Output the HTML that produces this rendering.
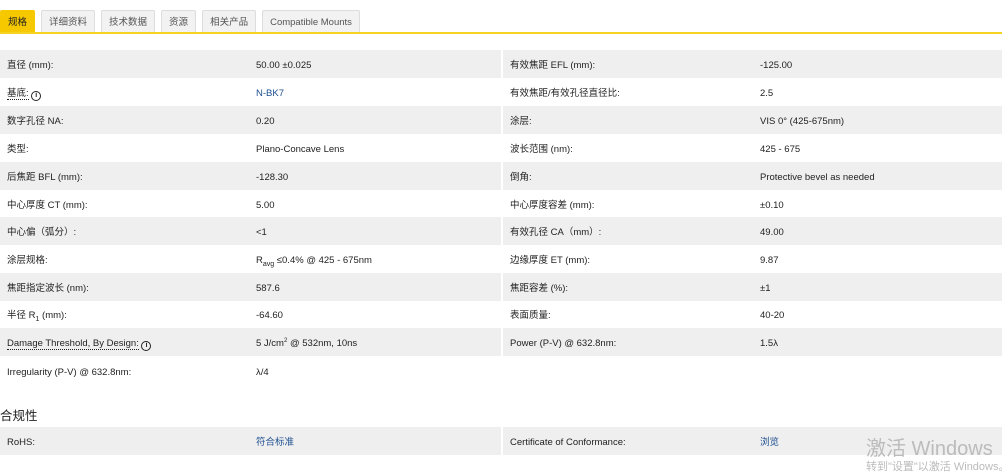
<!DOCTYPE html>
<html><head><meta charset="utf-8"><style>
*{margin:0;padding:0;box-sizing:border-box}
body{width:1002px;height:468px;overflow:hidden;background:#fff;font-family:"Liberation Sans","Noto Sans CJK SC",sans-serif;font-size:9.5px;color:#222;position:relative}
.tabs{position:absolute;top:10px;left:0;height:24px;display:flex;gap:6px}
.tab{height:23px;padding:0 7px;line-height:23px;background:#f2f2f2;border:1px solid #ddd;border-bottom:none;color:#555;font-size:9.5px;border-radius:2px 2px 0 0}
.tab.a{background:#f5c800;border-color:#f5c800;color:#222}
.line{position:absolute;top:32px;left:0;width:1002px;height:2px;background:#f5d320}
.row{position:absolute;left:0;width:1002px;height:28px;display:flex}
.half{width:503px;height:28px;position:relative}
.half+.half{width:499px}
.g .half{background:#efefef}
.g .half:first-child{border-right:2px solid #fff}
.l,.v{position:absolute;top:2px;height:28px;line-height:28px;white-space:nowrap}
.l{left:7px}.v{left:256px}
.half+.half .v{left:257px}
.blue{color:#1d4f91}
.i{display:inline-block;width:10px;height:10px;border:1.5px solid #222;border-radius:50%;font-size:7px;line-height:7px;text-align:center;font-weight:bold;vertical-align:-1px}
.dot{border-bottom:1px dotted #222}
.sb{font-size:7px;position:relative;top:3px;line-height:0}
.sp{font-size:6px;position:relative;top:-4px;line-height:0}
h3{position:absolute;top:405px;left:0;font-size:12.5px;font-weight:normal;color:#222}
.wm{position:absolute;left:866px;top:432px;font-size:20px;color:#bbb;white-space:nowrap}
.wm2{position:absolute;left:866px;top:458px;font-size:11px;color:#bbb;white-space:nowrap}
</style></head><body>
<div class="tabs"><div class="tab a">规格</div><div class="tab">详细资料</div><div class="tab">技术数据</div><div class="tab">资源</div><div class="tab">相关产品</div><div class="tab">Compatible Mounts</div></div>
<div class="line"></div>

<div class="row g" style="top:50px"><div class="half"><span class="l">直径 (mm):</span><span class="v">50.00 ±0.025</span></div><div class="half"><span class="l">有效焦距 EFL (mm):</span><span class="v">-125.00</span></div></div>
<div class="row" style="top:78px"><div class="half"><span class="l"><span class="dot">基底:</span> <span class="i">i</span></span><span class="v blue">N-BK7</span></div><div class="half"><span class="l">有效焦距/有效孔径直径比:</span><span class="v">2.5</span></div></div>
<div class="row g" style="top:106px"><div class="half"><span class="l">数字孔径 NA:</span><span class="v">0.20</span></div><div class="half"><span class="l">涂层:</span><span class="v">VIS 0° (425-675nm)</span></div></div>
<div class="row" style="top:134px"><div class="half"><span class="l">类型:</span><span class="v">Plano-Concave Lens</span></div><div class="half"><span class="l">波长范围 (nm):</span><span class="v">425 - 675</span></div></div>
<div class="row g" style="top:162px"><div class="half"><span class="l">后焦距 BFL (mm):</span><span class="v">-128.30</span></div><div class="half"><span class="l">倒角:</span><span class="v">Protective bevel as needed</span></div></div>
<div class="row" style="top:190px"><div class="half"><span class="l">中心厚度 CT (mm):</span><span class="v">5.00</span></div><div class="half"><span class="l">中心厚度容差 (mm):</span><span class="v">±0.10</span></div></div>
<div class="row g" style="top:217px"><div class="half"><span class="l">中心偏（弧分）:</span><span class="v">&lt;1</span></div><div class="half"><span class="l">有效孔径 CA（mm）:</span><span class="v">49.00</span></div></div>
<div class="row" style="top:245px"><div class="half"><span class="l">涂层规格:</span><span class="v">R<span class="sb">avg</span> ≤0.4% @ 425 - 675nm</span></div><div class="half"><span class="l">边缘厚度 ET (mm):</span><span class="v">9.87</span></div></div>
<div class="row g" style="top:273px"><div class="half"><span class="l">焦距指定波长 (nm):</span><span class="v">587.6</span></div><div class="half"><span class="l">焦距容差 (%):</span><span class="v">±1</span></div></div>
<div class="row" style="top:300px"><div class="half"><span class="l">半径 R<span class="sb">1</span> (mm):</span><span class="v">-64.60</span></div><div class="half"><span class="l">表面质量:</span><span class="v">40-20</span></div></div>
<div class="row g" style="top:328px"><div class="half"><span class="l"><span class="dot">Damage Threshold, By Design:</span> <span class="i">i</span></span><span class="v">5 J/cm<span class="sp">2</span> @ 532nm, 10ns</span></div><div class="half"><span class="l">Power (P-V) @ 632.8nm:</span><span class="v">1.5λ</span></div></div>
<div class="row" style="top:357px"><div class="half"><span class="l">Irregularity (P-V) @ 632.8nm:</span><span class="v">λ/4</span></div><div class="half"></div></div>

<h3>合规性</h3>
<div class="row g" style="top:427px"><div class="half"><span class="l">RoHS:</span><span class="v blue">符合标准</span></div><div class="half"><span class="l">Certificate of Conformance:</span><span class="v blue">浏览</span></div></div>
<div class="wm">激活 Windows</div>
<div class="wm2">转到"设置"以激活 Windows。</div>
</body></html>
